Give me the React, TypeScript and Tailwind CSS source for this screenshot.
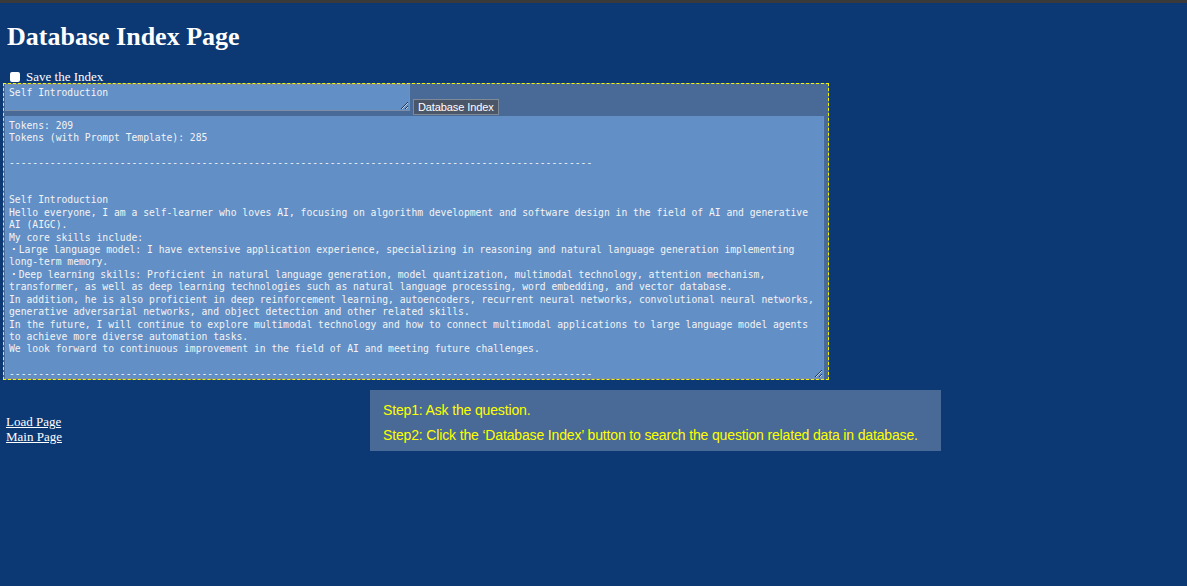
import React from 'react';

const dashes = '-'.repeat(100);

const indexText = [
  'Tokens: 209',
  'Tokens (with Prompt Template): 285',
  '',
  dashes,
  '',
  '',
  'Self Introduction',
  'Hello everyone, I am a self-learner who loves AI, focusing on algorithm development and software design in the field of AI and generative',
  'AI (AIGC).',
  'My core skills include:',
  '・Large language model: I have extensive application experience, specializing in reasoning and natural language generation implementing',
  'long-term memory.',
  '・Deep learning skills: Proficient in natural language generation, model quantization, multimodal technology, attention mechanism,',
  'transformer, as well as deep learning technologies such as natural language processing, word embedding, and vector database.',
  'In addition, he is also proficient in deep reinforcement learning, autoencoders, recurrent neural networks, convolutional neural networks,',
  'generative adversarial networks, and object detection and other related skills.',
  'In the future, I will continue to explore multimodal technology and how to connect multimodal applications to large language model agents',
  'to achieve more diverse automation tasks.',
  'We look forward to continuous improvement in the field of AI and meeting future challenges.',
  '',
  dashes,
].join('\n');

const monoFont = "font-['DejaVu_Sans_Mono','Noto_Sans_CJK_JP',monospace]";

const App: React.FC = () => {
  return (
    <div className="min-h-[586px] bg-[#0c3873] font-['Liberation_Serif',serif] text-white">
      <div className="h-[3px] bg-[#3a3a3a]" />

      <h1 className="ml-[7px] mt-[19px] text-[26px] leading-[30px] font-bold">Database Index Page</h1>

      <label className="mt-[17px] ml-[10px] flex items-center gap-[6px] text-[13px] leading-[15px]">
        <input type="checkbox" className="appearance-none w-[10px] h-[10px] bg-white rounded-[2px] m-0" />
        <span>Save the Index</span>
      </label>

      {/* index frame */}
      <div className="ml-[3px] -mt-px w-[826px] border border-dashed border-[#f5f500] bg-[#496a96] pl-px">
        <div className="flex items-end gap-[3px]">
          <textarea
            readOnly
            defaultValue="Self Introduction"
            className={`${monoFont} w-[405px] h-[27px] bg-[#628fc6] border border-[#7d8ea6] px-[3px] pt-[2px] text-[9.7px] leading-[12.4px] text-[#f4f4f4] outline-none overflow-hidden resize`}
          />
          <button className="mb-[-4px] h-[16px] px-[4px] bg-[#4b5668] border border-[#7f8a99] font-['Liberation_Sans',sans-serif] text-[11px] tracking-[-0.1px] leading-[14px] text-white">
            Database Index
          </button>
        </div>
        <textarea
          readOnly
          wrap="off"
          defaultValue={indexText}
          className={`${monoFont} block mt-[5px] w-[819px] h-[263px] bg-[#628fc6] border border-[#7d8ea6] border-t-0 px-[3px] pt-[4px] text-[9.7px] leading-[12.4px] text-[#f4f4f4] outline-none overflow-hidden resize`}
        />
      </div>

      <div className="mt-[10px] flex items-start">
        <div className="w-[364px] ml-[6px] mt-[24px] flex flex-col text-[13px] leading-[15px]">
          <a href="#" className="underline w-fit">Load Page</a>
          <a href="#" className="underline w-fit">Main Page</a>
        </div>
        <div className="w-[571px] h-[61px] bg-[#496a96] pl-[13px] pt-[12px] font-['Liberation_Sans',sans-serif] text-[14px] tracking-[-0.15px] leading-[16px] text-[#ffff00]">
          <p>Step1: Ask the question.</p>
          <p className="mt-[9px]">Step2: Click the ‘Database Index’ button to search the question related data in database.</p>
        </div>
      </div>
    </div>
  );
};

export default App;
